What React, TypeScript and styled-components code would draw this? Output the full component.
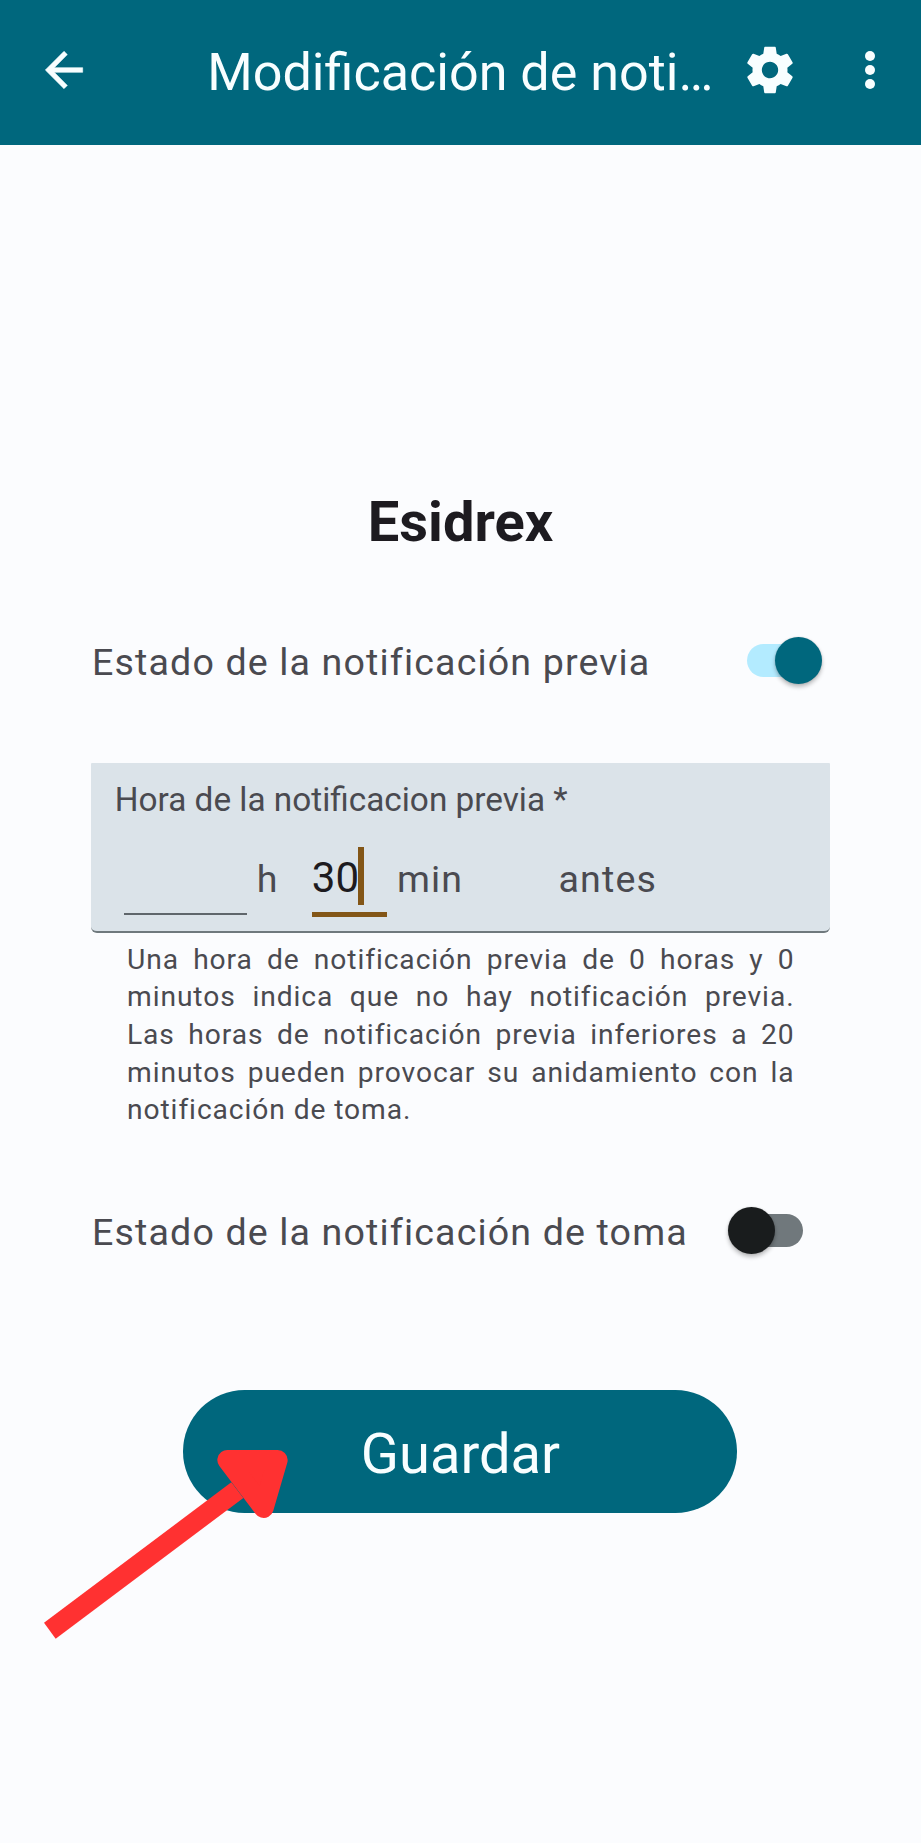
import React from 'react';
import styled, { createGlobalStyle } from 'styled-components';

const color = {
  primary: '#00677d',
  onPrimary: '#f8feff',
  surface: '#fbfcfe',
  field: '#dbe3e9',
  text: '#4a4a50',
  strong: '#1d1b20',
  accent: '#835617',
};

const GlobalStyle = createGlobalStyle`
  *, *::before, *::after { box-sizing: border-box; }
  body {
    margin: 0;
    background: ${color.surface};
    color: ${color.text};
    font-family: Roboto, "Liberation Sans", sans-serif;
  }
`;

const Screen = styled.div`
  display: flex;
  flex-direction: column;
  width: 921px;
  min-height: 1843px;
`;

const AppBar = styled.header`
  display: flex;
  align-items: center;
  height: 145px;
  padding: 0 23px 5px 36px;
  background: ${color.primary};
  color: ${color.onPrimary};
`;

const BarTitle = styled.h1`
  width: 505px;
  margin: 5px 0 0 115.3px;
  font-size: 52.1px;
  font-weight: 400;
  line-height: 62px;
  white-space: nowrap;
`;

const IconButton = styled.button<{ $gap?: number }>`
  display: flex;
  flex: none;
  width: 56px;
  height: 56px;
  margin-left: ${({ $gap = 0 }) => $gap}px;
  padding: 0;
  border: 0;
  background: none;
  color: inherit;

  svg {
    width: 56px;
    height: 56px;
    fill: currentColor;
  }
`;

const Main = styled.main`
  display: flex;
  flex-direction: column;
  padding: 344px 91px 0;
`;

const Medicine = styled.h2`
  margin: 0;
  color: ${color.strong};
  font-size: 56px;
  line-height: 66px;
  text-align: center;
`;

const SettingRow = styled.div<{ $top: number }>`
  display: flex;
  align-items: center;
  justify-content: space-between;
  height: 60px;
  margin-top: ${({ $top }) => $top}px;
`;

const BodyText = styled.span`
  font-size: 37.6px;
  letter-spacing: 1.14px;
  line-height: 44px;
  white-space: nowrap;
`;

const RowLabel = styled(BodyText)`
  padding: 4px 0 0 1px;
`;

const Track = styled.button<{ $on?: boolean }>`
  display: flex;
  flex: none;
  align-items: center;
  justify-content: ${({ $on }) => ($on ? 'flex-end' : 'flex-start')};
  width: 71px;
  height: 33px;
  margin-right: ${({ $on }) => ($on ? 12.5 : 27)}px;
  padding: 0;
  border: 0;
  border-radius: 17px;
  background: ${({ $on }) => ($on ? '#b3ebff' : '#70787c')};
`;

const Thumb = styled.span<{ $on?: boolean }>`
  flex: none;
  width: 47px;
  height: 47px;
  margin: 0 -4px;
  border-radius: 50%;
  background: ${({ $on }) => ($on ? color.primary : '#191c1d')};
  box-shadow: 0 3px 4px rgba(0, 0, 0, 0.26), 0 0 2px rgba(0, 0, 0, 0.14);
`;

const Field = styled.section`
  height: 170px;
  margin: 73px 0 0;
  padding-top: 17px;
  border-bottom: 2px solid #6f797d;
  border-radius: 1px 1px 6px 6px;
  background: ${color.field};
`;

const FieldLabel = styled.div`
  padding-left: 23.8px;
  font-size: 33.35px;
  line-height: 40px;
`;

const TimeRow = styled.div`
  display: flex;
  align-items: flex-start;
  margin-top: 27px;
  padding-left: 33.3px;
`;

const TimeInput = styled.div<{ $width: number; $active?: boolean }>`
  display: flex;
  width: ${({ $width }) => $width}px;
  height: ${({ $active }) => ($active ? 70 : 68.3)}px;
  border-bottom: ${({ $active }) => ($active ? `5px solid ${color.accent}` : '2px solid #5f666b')};
  color: ${color.strong};
  font-size: 42.1px;
  letter-spacing: 0.2px;
  line-height: 62px;
`;

const Caret = styled.span`
  width: 6px;
  height: 58px;
  margin-left: -1.5px;
  background: ${color.accent};
`;

const Unit = styled(BodyText)<{ $left: number }>`
  margin: 10px 0 0 ${({ $left }) => $left}px;
`;

const UnitSlot = styled.div<{ $width: number }>`
  display: flex;
  width: ${({ $width }) => $width}px;
`;

const HelperText = styled.p`
  margin: 7.5px 35.5px 0 36px;
  font-size: 28.2px;
  letter-spacing: 0.92px;
  line-height: 37.67px;
  text-align: justify;
`;

const SaveArea = styled.div`
  position: relative;
  display: flex;
  justify-content: center;
  margin-top: 130px;
`;

const SaveButton = styled.button`
  width: 554px;
  height: 123px;
  margin-right: 1px;
  padding: 5px 0 0 1px;
  border: 0;
  border-radius: 62px;
  background: ${color.primary};
  color: ${color.onPrimary};
  font: 400 56.1px/66px Roboto, "Liberation Sans", sans-serif;
`;

const Pointer = styled.svg`
  position: absolute;
  top: -10px;
  left: -61px;
  width: 260px;
  height: 260px;
`;

function Switch({ on }: { on?: boolean }) {
  return (
    <Track type="button" role="switch" aria-checked={!!on} $on={on}>
      <Thumb $on={on} />
    </Track>
  );
}

export default function App() {
  return (
    <Screen>
      <GlobalStyle />
      <AppBar>
        <IconButton aria-label="Atrás">
          <svg viewBox="0 0 24 24">
            <path
              d="M20 11H7.83l5.59-5.59L12 4l-8 8 8 8 1.41-1.41L7.83 13H20v-2z"
              stroke="currentColor"
              strokeWidth="0.25"
            />
          </svg>
        </IconButton>
        <BarTitle>Modificación de noti…</BarTitle>
        <IconButton aria-label="Ajustes" $gap={30.2}>
          <svg viewBox="0 0 24 24">
            <path d="M19.43 12.98c.04-.32.07-.64.07-.98s-.03-.66-.07-.98l2.11-1.65c.19-.15.24-.42.12-.64l-2-3.46c-.12-.22-.39-.3-.61-.22l-2.49 1c-.52-.4-1.08-.73-1.69-.98l-.38-2.65C14.46 2.18 14.25 2 14 2h-4c-.25 0-.46.18-.49.42l-.38 2.65c-.61.25-1.17.59-1.69.98l-2.49-1c-.23-.09-.49 0-.61.22l-2 3.46c-.13.22-.07.49.12.64l2.11 1.65c-.04.32-.07.65-.07.98s.03.66.07.98l-2.11 1.65c-.19.15-.24.42-.12.64l2 3.46c.12.22.39.3.61.22l2.49-1c.52.4 1.08.73 1.69.98l.38 2.65c.03.24.24.42.49.42h4c.25 0 .46-.18.49-.42l.38-2.65c.61-.25 1.17-.59 1.69-.98l2.49 1c.23.09.49 0 .61-.22l2-3.46c.12-.22.07-.49-.12-.64l-2.11-1.65zM12 15.5c-1.93 0-3.5-1.57-3.5-3.5s1.57-3.5 3.5-3.5 3.5 1.57 3.5 3.5-1.57 3.5-3.5 3.5z" />
          </svg>
        </IconButton>
        <IconButton aria-label="Más opciones" $gap={43.2}>
          <svg viewBox="0 0 24 24">
            <circle cx="12" cy="6" r="2.15" />
            <circle cx="12" cy="12" r="2.15" />
            <circle cx="12" cy="18" r="2.15" />
          </svg>
        </IconButton>
      </AppBar>

      <Main>
        <Medicine>Esidrex</Medicine>

        <SettingRow $top={75}>
          <RowLabel>Estado de la notificación previa</RowLabel>
          <Switch on />
        </SettingRow>

        <Field>
          <FieldLabel>Hora de la notificacion previa *</FieldLabel>
          <TimeRow>
            <TimeInput $width={122.4} />
            <UnitSlot $width={65}>
              <Unit $left={10}>h</Unit>
            </UnitSlot>
            <TimeInput $width={75.5} $active>
              30
              <Caret />
            </TimeInput>
            <UnitSlot $width={171.3}>
              <Unit $left={9.7}>min</Unit>
            </UnitSlot>
            <Unit $left={0}>antes</Unit>
          </TimeRow>
        </Field>
        <HelperText>
          Una hora de notificación previa de 0 horas y 0 minutos indica que no hay notificación
          previa. Las horas de notificación previa inferiores a 20 minutos pueden provocar su
          anidamiento con la notificación de toma.
        </HelperText>

        <SettingRow $top={71.4}>
          <RowLabel>Estado de la notificación de toma</RowLabel>
          <Switch />
        </SettingRow>

        <SaveArea>
          <SaveButton type="button">Guardar</SaveButton>
          <Pointer viewBox="0 0 780 780" aria-hidden="true">
            <path d="M42 728L604 307l36 47L77 776z" fill="#ff3131" />
            <path
              d="M592 240h151l-42 144z"
              fill="#ff3131"
              stroke="#ff3131"
              strokeWidth="60"
              strokeLinejoin="round"
            />
          </Pointer>
        </SaveArea>
      </Main>
    </Screen>
  );
}
